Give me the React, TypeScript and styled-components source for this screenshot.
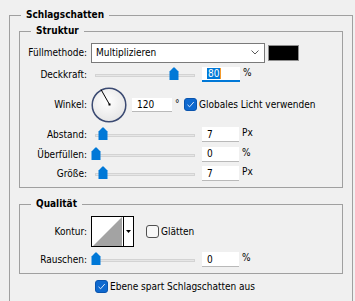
import React from 'react';
import styled, { createGlobalStyle } from 'styled-components';

const GlobalStyle = createGlobalStyle`
  html, body {
    margin: 0;
    background: #f0f0f0;
  }
  body {
    font-family: 'DejaVu Sans Condensed', 'Liberation Sans', Arial, sans-serif;
    font-size: 10px;
    color: #000;
  }
`;

const Window = styled.div`
  box-sizing: border-box;
  height: 301px;
  padding: 9px 2px 0 9px;
  overflow: hidden;
`;

const Group = styled.fieldset`
  margin: 0;
  padding: 0;
  min-width: 0;
  border: 1px solid #a0a0a0;

  & + & {
    margin-top: 10px;
  }
`;

const Legend = styled.legend`
  margin-left: 11px;
  padding: 0 5px;
  font-weight: bold;
  line-height: 12px;
`;

const GroupBody = styled.div<{ $pad: string; $gap?: string }>`
  display: flex;
  flex-direction: column;
  padding: ${({ $pad }) => $pad};
  gap: ${({ $gap }) => $gap ?? '0'};
`;

const Row = styled.div<{ $height: number }>`
  display: flex;
  align-items: center;
  height: ${({ $height }) => $height}px;
`;

const Label = styled.span`
  flex: 0 0 67px;
  margin-right: 4px;
  text-align: right;
  white-space: nowrap;
`;

const Select = styled.div`
  box-sizing: border-box;
  width: 174px;
  height: 20px;
  display: flex;
  align-items: center;
  justify-content: space-between;
  padding: 0 5px 0 4px;
  background: #fff;
  border: 1px solid #7a7a7a;
`;

const Swatch = styled.div`
  box-sizing: border-box;
  margin-left: 3px;
  width: 31px;
  height: 16px;
  border: 1px solid #8e8e8e;
  background: #000;
`;

const SliderBox = styled.div`
  position: relative;
  flex-shrink: 0;
  width: 107px;
  height: 15px;
`;

const Track = styled.div`
  position: absolute;
  left: 4px;
  right: 3px;
  top: 7px;
  height: 3px;
  box-sizing: border-box;
  border: 1px solid #d3d3d3;
  background: #e6e6e6;
`;

const Thumb = styled.svg`
  position: absolute;
  top: 0;
`;

const FieldGroup = styled.div<{ $gap: number }>`
  display: flex;
  align-items: flex-start;
  margin-left: ${({ $gap }) => $gap}px;
`;

const Field = styled.div<{ $width: number; $height?: number; $focused?: boolean }>`
  box-sizing: border-box;
  display: flex;
  align-items: center;
  width: ${({ $width }) => $width}px;
  height: ${({ $height }) => $height ?? 15}px;
  padding-left: 5px;
  background: #fff;
  border-bottom: ${({ $focused }) => ($focused ? '2px solid #0078d7' : '1px solid #b9b9b9')};
`;

const Selection = styled.span`
  padding: 0 1px;
  line-height: 11px;
  background: #0078d7;
  color: #fff;
`;

const Caret = styled.span`
  width: 1px;
  height: 11px;
  background: #f39a2b;
`;

const Unit = styled.span<{ $width?: number }>`
  margin-left: 3px;
  line-height: 11px;
  width: ${({ $width }) => ($width ? `${$width}px` : 'auto')};
`;

const CheckLabel = styled.label<{ $offset?: number }>`
  display: inline-flex;
  align-items: center;
  gap: 2px;
  margin-left: ${({ $offset }) => $offset ?? 0}px;
  white-space: nowrap;
`;

const Box = styled.span<{ $checked?: boolean }>`
  box-sizing: border-box;
  flex-shrink: 0;
  display: inline-flex;
  align-items: center;
  justify-content: center;
  width: 13px;
  height: 13px;
  border-radius: 3px;
  background: ${({ $checked }) => ($checked ? '#0f69cf' : '#f7f7f7')};
  border: 1px solid ${({ $checked }) => ($checked ? '#0a54ad' : '#505050')};
`;

const Dial = styled.svg`
  flex-shrink: 0;
  margin-right: 5px;
`;

const Contour = styled.div`
  box-sizing: border-box;
  display: flex;
  width: 43px;
  height: 31px;
  border: 1px solid #000;
  background: #fff;
`;

const ContourPreview = styled.svg`
  display: block;
  border-right: 1px solid #000;
`;

const ContourArrow = styled.div`
  flex: 1;
  display: flex;
  align-items: center;
  justify-content: center;
`;

const FooterRow = styled.div`
  display: flex;
  margin-top: 6px;
  padding-left: 76px;
`;

const Chevron = () => (
  <svg width="8" height="5" viewBox="0 0 8 5">
    <polyline points="0.5,0.5 4,4 7.5,0.5" fill="none" stroke="#5a5a5a" strokeWidth="1" />
  </svg>
);

const Slider = ({ position }: { position: number }) => (
  <SliderBox>
    <Track />
    <Thumb width="10" height="13" viewBox="0 0 10 13" style={{ left: Math.round(position * 97) }}>
      <path d="M0.5 4.5 L4.2 0.7 Q5 0 5.8 0.7 L9.5 4.5 V13 H0.5 Z" fill="#0078d7" />
    </Thumb>
  </SliderBox>
);

const Checkbox = ({ checked, label, offset }: { checked?: boolean; label: string; offset?: number }) => (
  <CheckLabel $offset={offset}>
    <Box $checked={checked}>
      {checked && (
        <svg width="9" height="9" viewBox="0 0 9 9">
          <polyline points="1.5,4.8 3.6,6.8 7.8,2" fill="none" stroke="#d6e7fb" strokeWidth="1" />
        </svg>
      )}
    </Box>
    {label}
  </CheckLabel>
);

const SliderRow = ({
  label,
  position,
  value,
  unit,
}: {
  label: string;
  position: number;
  value: string;
  unit: string;
}) => (
  <Row $height={15}>
    <Label>{label}</Label>
    <Slider position={position} />
    <FieldGroup $gap={4}>
      <Field $width={37}>{value}</Field>
      <Unit>{unit}</Unit>
    </FieldGroup>
  </Row>
);

const App = () => (
  <>
    <GlobalStyle />
    <Window>
      <Group>
        <Legend>Schlagschatten</Legend>
        <GroupBody $pad="4px 9px 30px 9px">
          <Group>
            <Legend>Struktur</Legend>
            <GroupBody $pad="5.5px 0 6px 0" $gap="4.5px">
              <Row $height={20}>
                <Label>Füllmethode:</Label>
                <Select>
                  Multiplizieren
                  <Chevron />
                </Select>
                <Swatch />
              </Row>
              <Row $height={15}>
                <Label>Deckkraft:</Label>
                <Slider position={0.8} />
                <FieldGroup $gap={4}>
                  <Field $width={38} $focused>
                    <Selection>80</Selection>
                    <Caret />
                  </Field>
                  <Unit>%</Unit>
                </FieldGroup>
              </Row>
              <Row $height={36}>
                <Label>Winkel:</Label>
                <Dial width="36" height="36" viewBox="0 0 36 36">
                  <defs>
                    <radialGradient id="dialFill" cx="0.45" cy="0.4" r="0.6">
                      <stop offset="0" stopColor="#ffffff" />
                      <stop offset="1" stopColor="#e6e6e6" />
                    </radialGradient>
                  </defs>
                  <circle cx="18" cy="18" r="16.8" fill="url(#dialFill)" stroke="#3b4a72" strokeWidth="1.5" />
                  <line x1="18.5" y1="17.5" x2="10" y2="2.5" stroke="#000" strokeWidth="1" />
                  <rect x="17.5" y="16.5" width="2" height="2" fill="#000" />
                </Dial>
                <FieldGroup $gap={0}>
                  <Field $width={40} $height={14}>120</Field>
                  <Unit $width={9}>°</Unit>
                </FieldGroup>
                <Checkbox checked label="Globales Licht verwenden" offset={0} />
              </Row>
              <SliderRow label="Abstand:" position={7 / 97} value="7" unit="Px" />
              <SliderRow label="Überfüllen:" position={0} value="0" unit="%" />
              <SliderRow label="Größe:" position={7 / 97} value="7" unit="Px" />
            </GroupBody>
          </Group>
          <Group>
            <Legend>Qualität</Legend>
            <GroupBody $pad="6px 0 6px 0" $gap="5px">
              <Row $height={31}>
                <Label>Kontur:</Label>
                <Contour>
                  <ContourPreview width="31" height="29" viewBox="0 0 31 29">
                    <polygon points="1,29 30,0 30,29" fill="#a3a3a3" />
                  </ContourPreview>
                  <ContourArrow>
                    <svg width="5" height="3" viewBox="0 0 5 3">
                      <polygon points="0,0 5,0 2.5,3" fill="#000" />
                    </svg>
                  </ContourArrow>
                </Contour>
                <Checkbox label="Glätten" offset={12} />
              </Row>
              <SliderRow label="Rauschen:" position={0} value="0" unit="%" />
            </GroupBody>
          </Group>
          <FooterRow>
            <Checkbox checked label="Ebene spart Schlagschatten aus" />
          </FooterRow>
        </GroupBody>
      </Group>
    </Window>
  </>
);

export default App;
